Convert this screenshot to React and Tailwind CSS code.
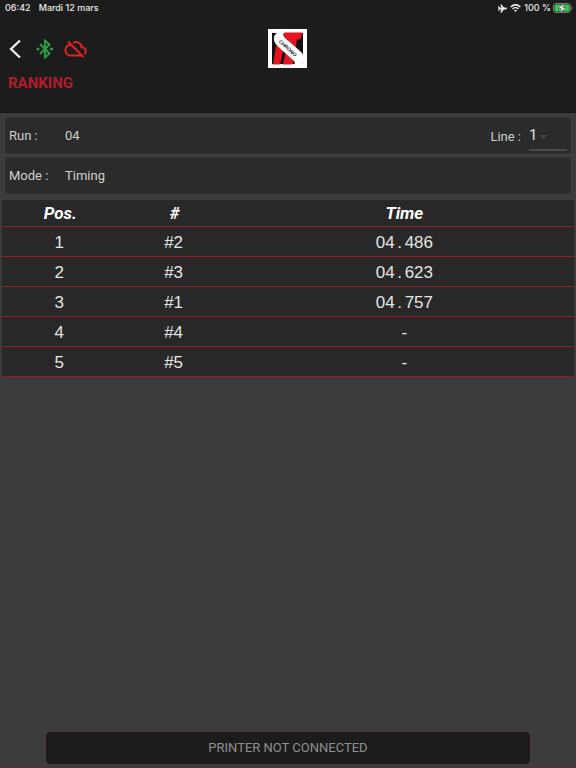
import { useState } from 'react';

const RESULTS = [
    { pos: 1, number: '#2', time: '04.486' },
    { pos: 2, number: '#3', time: '04.623' },
    { pos: 3, number: '#1', time: '04.757' },
    { pos: 4, number: '#4', time: null },
    { pos: 5, number: '#5', time: null },
];

function StatusBar() {
    return (
        <div className="flex h-4 items-center justify-between pl-[5px] pr-[3px] font-['Inter',sans-serif] text-[9px] font-medium text-[#e8e8e8]">
            <div className="flex gap-2">
                <span>06:42</span>
                <span>Mardi 12 mars</span>
            </div>
            <div className="flex items-center gap-[3px]">
                <svg className="h-[9px] w-[9px]" viewBox="0 0 24 24" fill="currentColor" aria-hidden="true">
                    <path d="M24 12c0-1.500-1.200-2.500-2.800-2.500H16L9.500 1H6l3 8.500H5L2.500 6H0l1.300 6L0 18h2.500L5 14.500h4L6 23h3.500L16 14.500h5.200c1.600 0 2.800-1 2.800-2.500z" />
                </svg>
                <svg className="h-2 w-[11px]" viewBox="0 0 20 15" fill="none" stroke="currentColor" strokeWidth="3" aria-hidden="true">
                    <path d="M1 5.500C6 .3 14 .3 19 5.500" />
                    <path d="M4.500 9.300c3-3 8-3 11 0" />
                    <path d="M7.300 12c1.600-1.400 3.800-1.400 5.400 0L10 15z" fill="currentColor" stroke="none" />
                </svg>
                <span>100 %</span>
                <svg className="-ml-px h-[10px] w-5" viewBox="0 0 20 10" aria-hidden="true">
                    <rect x="0.500" y="0.500" width="17" height="9" rx="2.500" fill="none" stroke="#7c7c7c" />
                    <rect x="1.500" y="1.500" width="15" height="7" rx="1.500" fill="#34c94f" />
                    <path d="M18.500 3.500c1.200.4 1.200 2.600 0 3z" fill="#7c7c7c" />
                    <path d="M11.200.3 5 5.600h3.300L6.800 9.700l6.200-5.300H9.700z" fill="#fff" stroke="#1c1c1c" strokeWidth="0.400" />
                </svg>
            </div>
        </div>
    );
}

function Logo() {
    return (
        <svg className="h-[39px] w-[39px]" viewBox="0 0 39 39" role="img" aria-label="iT Chrono">
            <rect width="39" height="39" fill="#fff" />
            <rect x="4" y="4" width="31" height="31" fill="#151010" />
            {/* i */}
            <path d="M8 17h8l-3.500 17c-.2 1-.8 1.500-1.500 1.500H5z" fill="#e3131f" />
            {/* T */}
            <path d="M16 3.500h18.500L33 9c-.3 1-1 1.500-2 1.500h-2L25 34c-.2 1-.8 1.500-1.500 1.500H15L20 10.500h-5z" fill="#e3131f" />
            {/* S */}
            <path
                d="M17 3h-5C7.500 3.500 5.500 7 6 11c.3 2 1.500 4 3.500 6L26 32c1.500 1.500 1 3.500-1 4.500h7c5-2 5.500-7 3-11-.7-1.200-1.500-2-3-3.500L16.500 8.500C14.500 6.500 15 4.500 17 3z"
                fill="#fff"
            />
            <text
                x="20"
                y="21"
                transform="rotate(42 20 19)"
                textAnchor="middle"
                fontSize="5"
                fontWeight="bold"
                fontFamily="Liberation Sans, sans-serif"
                fill="#151010"
            >
                CHRONO
            </text>
        </svg>
    );
}

function Header() {
    return (
        <header className="h-[113px] border-b border-[#181818] bg-[#1c1c1c]">
            <StatusBar />
            <div className="grid grid-cols-3 px-2 pt-[13px]">
                <div className="flex items-center gap-3">
                    <button type="button" aria-label="Back" className="h-5 w-[14px] text-[#f0f0f0]">
                        <svg viewBox="0 0 14 20" fill="none" stroke="currentColor" strokeWidth="2.300" aria-hidden="true">
                            <path d="M12 1.500 3 10 12 18.500" />
                        </svg>
                    </button>
                    <svg className="ml-[2px] h-5 w-[18px] text-[#25a244]" viewBox="0 0 18 20" fill="none" stroke="currentColor" strokeWidth="1.900" role="img" aria-label="Bluetooth connected">
                        <path d="M4 5l9.500 9.500L9 18.500v-17l4.500 4L4 15" />
                        <circle cx="2" cy="10" r="1.600" fill="currentColor" stroke="none" />
                        <circle cx="15.500" cy="10" r="1.600" fill="currentColor" stroke="none" />
                    </svg>
                    <svg className="-ml-[2px] h-[18px] w-6" viewBox="0 0 24 18" fill="none" stroke="#e02424" strokeWidth="2" role="img" aria-label="Cloud offline">
                        <path d="M4 1.500 19.500 17" />
                        <path d="M7 5C3.500 5.200 1.500 7.500 1.500 10.300c0 3 2.200 5.200 5.200 5.200H18" />
                        <path d="M9 2.800C13 .8 17.300 3 17.600 7.200c2.700.2 4.200 1.800 4.200 4.100 0 1.300-.5 2.300-1.400 3" />
                    </svg>
                </div>
                <div className="flex justify-center">
                    <Logo />
                </div>
            </div>
            <h1 className="px-2 pt-[3px] text-[15px] leading-6 font-bold text-[#b01e28]">RANKING</h1>
        </header>
    );
}

function InfoRow({ label, value, children }) {
    return (
        <div className="flex h-[37px] items-center rounded-xs border border-[#313131] bg-[#2b2b2b] px-[3px] text-[13px] text-[#cfcfcf]">
            <span className="w-14">{label}</span>
            <span>{value}</span>
            {children}
        </div>
    );
}

function LineSelect() {
    const [line, setLine] = useState('1');

    return (
        <div className="ml-auto flex items-center gap-2 pt-[2px]">
            <label htmlFor="line">Line :</label>
            <div className="relative">
                <select
                    id="line"
                    value={line}
                    onChange={(e) => setLine(e.target.value)}
                    className="h-7 w-[38px] appearance-none rounded-none border-b-2 border-[#4b4b4b] bg-transparent text-[15px] text-[#e0e0e0] outline-none"
                >
                    <option value="1">1</option>
                    <option value="2">2</option>
                </select>
                <svg className="pointer-events-none absolute top-3 left-[11px] h-1 w-[7px]" viewBox="0 0 7 4" fill="#4b4b4b" aria-hidden="true">
                    <path d="M0 0h7L3.500 4z" />
                </svg>
            </div>
        </div>
    );
}

function Time({ value }) {
    if (!value) return '-';
    const [seconds, millis] = value.split('.');
    return (
        <>
            {seconds}
            <span className="inline-block w-[10px] text-center">.</span>
            {millis}
        </>
    );
}

function RankingTable() {
    return (
        <table className="w-full table-fixed border-separate border-spacing-0 bg-[#282828] text-center">
            <thead>
                <tr className="h-[27px] text-[17px] leading-6 text-white italic">
                    <th className="w-1/5 border-b border-[#96202a] p-0 pl-[2px] font-bold">Pos.</th>
                    <th className="w-1/5 border-b border-[#96202a] p-0 pl-[2px] font-bold">#</th>
                    <th className="border-b border-[#96202a] p-0 pl-1 font-bold">Time</th>
                </tr>
            </thead>
            <tbody className="font-['Liberation_Sans',Arial,sans-serif] text-[17px] leading-6 text-[#e4e4e4]">
                {RESULTS.map((result) => (
                    <tr key={result.pos} className="h-[30px]">
                        <td className="border-b border-[#96202a] p-0 pt-[2px]">{result.pos}</td>
                        <td className="border-b border-[#96202a] p-0 pt-[2px]">{result.number}</td>
                        <td className="border-b border-[#96202a] p-0 pt-[2px] pl-1"><Time value={result.time} /></td>
                    </tr>
                ))}
            </tbody>
        </table>
    );
}

export default function App() {
    return (
        <div className="flex min-h-screen flex-col bg-[#3c3c3c] font-['Roboto',sans-serif]">
            <Header />
            <main className="flex-1">
                <div className="flex flex-col gap-[3px] px-[5px] pt-1 pb-[6px]">
                    <InfoRow label="Run :" value="04">
                        <LineSelect />
                    </InfoRow>
                    <InfoRow label="Mode :" value="Timing" />
                </div>
                <div className="px-[2px]">
                    <RankingTable />
                </div>
            </main>
            <footer className="flex justify-center border-b border-[#4a3438] pb-[3px]">
                <button type="button" className="h-8 w-[84%] rounded-sm border border-[#2b1417] bg-[#1c1c1c] text-[13px] text-[#8f8f8f]">
                    PRINTER NOT CONNECTED
                </button>
            </footer>
        </div>
    );
}
